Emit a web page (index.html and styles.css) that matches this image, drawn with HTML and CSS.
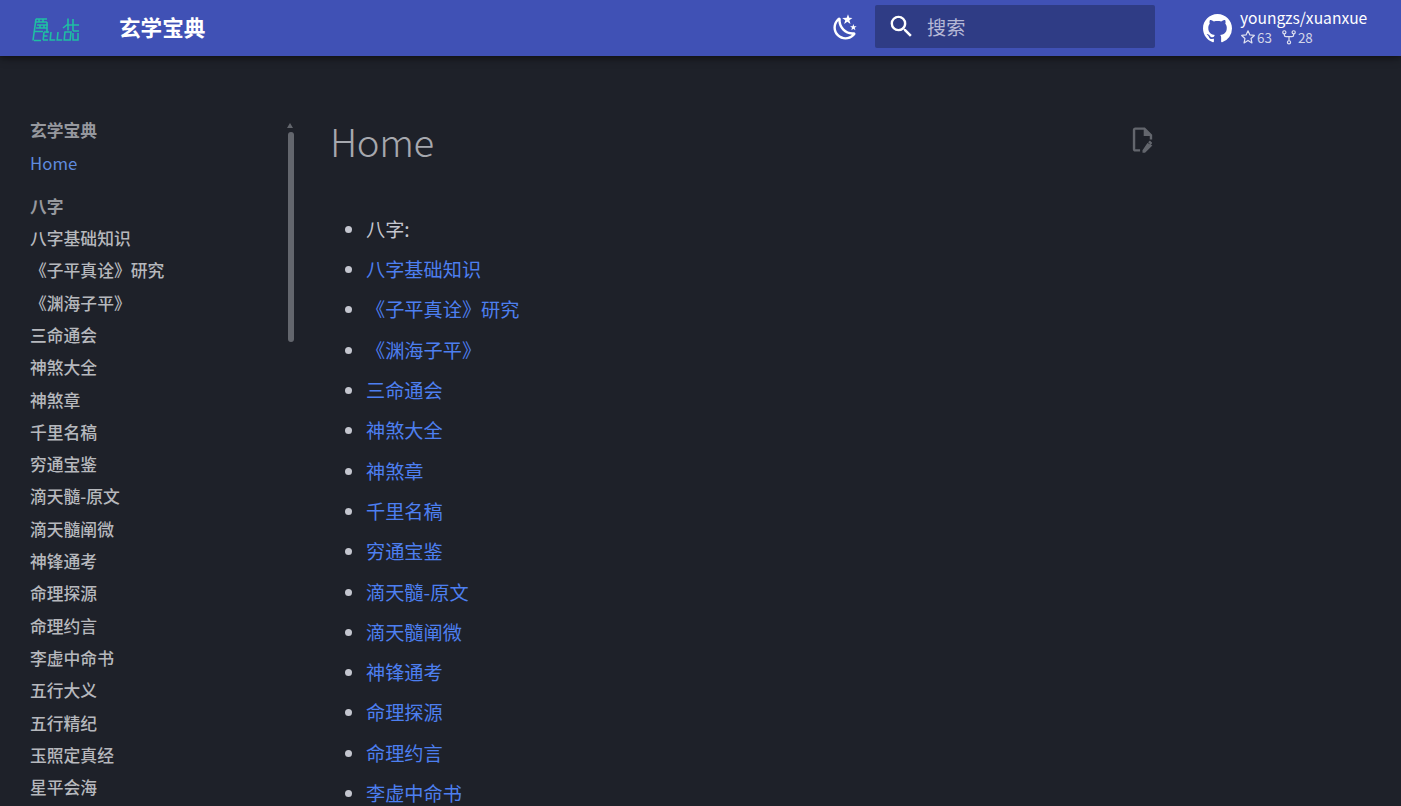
FILE: index.html
```html
<!DOCTYPE html>
<html lang="zh">
<head>
<meta charset="utf-8">
<title>玄学宝典</title>
<link rel="stylesheet" href="styles.css">
</head>
<body>
<header class="header">
  <a class="logo" href="#">
    <svg viewBox="0 0 49 24" width="49" height="24" fill="none" stroke="#1fbfa3" stroke-width="1.600">
      <path d="M5 .8 2 22.500M5 1h11M5 4h11M6 7h11M5 10h11M8 1v3M12 1v3M9 7v3M13 7v3M16 4v11"/>
      <path d="M3 13.500h9M3 22.500h7"/>
      <path d="M13 14h5M13 14l-.8 8M12.500 18h4M12 22h5M20 14l-.8 8h5M27 14l-.8 8h5M34 14h6l-.8 8h-6z"/>
      <path d="M37 .5v12M42 1v12M37 6l-5 4M37 7h11M42 13h6"/>
      <path d="M42 15v7h5v-7"/>
    </svg>
  </a>
  <div class="site-title">玄学宝典</div>
  <button class="theme" aria-label="切换主题">
    <svg viewBox="0 0 24 24" width="29" height="29" fill="#fff"><path d="M17.750 4.090 15.220 6.030l.910 3.060-2.630-1.810-2.630 1.810.910-3.060-2.530-1.940L13 4l1.060-3 1.060 3zm3.500 6.910-1.640 1.250.590 1.980-1.700-1.170-1.700 1.170.590-1.980L15.750 11l2.060-.050L18.500 9l.690 1.950zm-2.280 4.950c.830-.080 1.720 1.100 1.190 1.850-.320.450-.660.870-1.080 1.270C15.170 23 8.840 23 4.940 19.070c-3.910-3.900-3.910-10.240 0-14.140.400-.400.820-.760 1.270-1.080.750-.530 1.930.360 1.850 1.190-.270 2.860.690 5.830 2.890 8.020a9.960 9.960 0 0 0 8.020 2.890m-1.640 2.020a12.080 12.080 0 0 1-7.800-3.470c-2.170-2.190-3.330-5-3.490-7.820-2.810 3.140-2.700 7.960.310 10.980 3.020 3.010 7.840 3.120 10.980.310"/></svg>
  </button>
  <div class="search">
    <svg viewBox="0 0 24 24" width="29" height="29" fill="#fff"><path d="M9.500 3A6.500 6.500 0 0 1 16 9.500c0 1.610-.590 3.090-1.560 4.230l.270.270h.790l5 5-1.500 1.500-5-5v-.790l-.270-.270A6.516 6.516 0 0 1 9.500 16 6.500 6.500 0 0 1 3 9.500 6.500 6.500 0 0 1 9.500 3m0 2C7 5 5 7 5 9.500S7 14 9.500 14 14 12 14 9.500 12 5 9.500 5"/></svg>
    <span class="search-label">搜索</span>
  </div>
  <a class="repo" href="#">
    <svg class="repo-icon" viewBox="0 0 16 16" width="29" height="29" fill="#fff"><path d="M8 0C3.580 0 0 3.580 0 8c0 3.540 2.290 6.530 5.470 7.590.400.070.550-.170.550-.380 0-.190-.010-.820-.010-1.490-2.010.370-2.530-.490-2.690-.940-.090-.230-.480-.940-.820-1.130-.280-.150-.680-.520-.010-.530.630-.010 1.080.580 1.230.820.720 1.210 1.870.870 2.330.660.070-.520.280-.870.510-1.070-1.780-.200-3.640-.890-3.640-3.950 0-.870.310-1.590.820-2.150-.080-.200-.360-1.020.080-2.120 0 0 .670-.210 2.200.820.640-.180 1.320-.270 2-.270s1.360.090 2 .270c1.530-1.040 2.200-.820 2.200-.820.440 1.100.160 1.920.080 2.120.510.560.820 1.270.820 2.150 0 3.070-1.870 3.750-3.650 3.950.290.250.540.730.540 1.480 0 1.070-.010 1.930-.010 2.200 0 .210.150.460.550.380A8.010 8.010 0 0 0 16 8c0-4.420-3.580-8-8-8"/></svg>
    <div class="repo-text">
      <div class="repo-name">youngzs/xuanxue</div>
      <div class="repo-facts">
        <span class="fact">
          <svg viewBox="0 0 24 24" width="16" height="16" fill="none" stroke="#dfe1f0" stroke-width="1.800" stroke-linejoin="round"><path d="M12 2.800l2.900 6.100 6.600.800-4.900 4.600 1.300 6.600L12 17.200l-5.900 3.700 1.300-6.600-4.900-4.600 6.600-.800z"/></svg><span>63</span>
        </span>
        <span class="fact">
          <svg viewBox="0 0 24 24" width="16" height="16" fill="none" stroke="#dfe1f0" stroke-width="1.800"><circle cx="5" cy="5" r="2.400"/><circle cx="19" cy="5" r="2.400"/><circle cx="12" cy="20" r="2.400"/><path d="M5 7.500V9q0 2.500 2.500 2.500h9Q19 11.500 19 9V7.500M12 11.500v6"/></svg><span>28</span>
        </span>
      </div>
    </div>
  </a>
</header>
<div class="page">
  <nav class="sidebar">
    <div class="nav-scroll">
      <div class="nav-head nav-head-top">玄学宝典</div>
      <a class="nav-link nav-active" href="#">Home</a>
      <div class="nav-head nav-head-section">八字</div>
      <a class="nav-link" href="#">八字基础知识</a>
      <a class="nav-link" href="#">《子平真诠》研究</a>
      <a class="nav-link" href="#">《渊海子平》</a>
      <a class="nav-link" href="#">三命通会</a>
      <a class="nav-link" href="#">神煞大全</a>
      <a class="nav-link" href="#">神煞章</a>
      <a class="nav-link" href="#">千里名稿</a>
      <a class="nav-link" href="#">穷通宝鉴</a>
      <a class="nav-link" href="#">滴天髓-原文</a>
      <a class="nav-link" href="#">滴天髓阐微</a>
      <a class="nav-link" href="#">神锋通考</a>
      <a class="nav-link" href="#">命理探源</a>
      <a class="nav-link" href="#">命理约言</a>
      <a class="nav-link" href="#">李虚中命书</a>
      <a class="nav-link" href="#">五行大义</a>
      <a class="nav-link" href="#">五行精纪</a>
      <a class="nav-link" href="#">玉照定真经</a>
      <a class="nav-link" href="#">星平会海</a>
    </div>
    <div class="scroll-arrow"></div>
    <div class="scroll-thumb"></div>
  </nav>
  <main class="content">
    <a class="edit" href="#" aria-label="编辑">
      <svg viewBox="0 0 24 24" width="29" height="29" fill="#63666d"><path d="M6 2c-1.100 0-2 .900-2 2v16c0 1.100.900 2 2 2h4v-2H6V4h7v5h5v3h2V8l-6-6zm12.100 11c-.100 0-.300.100-.400.200l-1 1 2.100 2.100 1-1c.200-.200.200-.600 0-.800l-1.300-1.300c-.100-.100-.200-.200-.400-.200m-2 1.800L12 20.900V23h2.100l6.100-6.100z"/></svg>
    </a>
    <h1 class="title">Home</h1>
    <ul class="list">
      <li>八字:</li>
      <li><a href="#">八字基础知识</a></li>
      <li><a href="#">《子平真诠》研究</a></li>
      <li><a href="#">《渊海子平》</a></li>
      <li><a href="#">三命通会</a></li>
      <li><a href="#">神煞大全</a></li>
      <li><a href="#">神煞章</a></li>
      <li><a href="#">千里名稿</a></li>
      <li><a href="#">穷通宝鉴</a></li>
      <li><a href="#">滴天髓-原文</a></li>
      <li><a href="#">滴天髓阐微</a></li>
      <li><a href="#">神锋通考</a></li>
      <li><a href="#">命理探源</a></li>
      <li><a href="#">命理约言</a></li>
      <li><a href="#">李虚中命书</a></li>
    </ul>
  </main>
</div>
</body>
</html>
```
FILE: styles.css
```css
* { box-sizing: border-box; }
html, body { margin: 0; height: 100%; overflow: hidden; }
body {
  background: #1e2129;
  font-family: "Noto Sans CJK SC", "Noto Sans", sans-serif;
  color: #d5d7e2;
}
a { text-decoration: none; color: inherit; }
.header {
  height: 56px;
  background: #4051b5;
  display: flex;
  align-items: center;
  color: #fff;
  box-shadow: 0 0 4px rgba(0,0,0,.3), 0 3px 8px rgba(0,0,0,.35);
  position: relative;
}
.logo { margin-left: 31px; margin-top: 3px; width: 49px; height: 24px; display: flex; }
.site-title { margin-left: 39px; margin-top: -2px; font-size: 21.600px; font-weight: 700; line-height: 28px; flex: 1; }
.theme { background: none; border: 0; padding: 0; width: 29px; height: 29px; margin-top: -2px; margin-right: 15px; display: flex; }
.search {
  width: 280px; height: 43px; margin-top: -3px;
  background: #2f3c85;
  border-radius: 2px;
  display: flex; align-items: center;
  padding-left: 12px;
}
.search-label { margin-left: 11px; font-size: 19.200px; color: #b5b8d6; }
.repo { margin-left: 48px; width: 198px; display: flex; align-items: center; }
.repo-icon { margin-right: 8px; flex: none; }
.repo-text { display: flex; flex-direction: column; gap: 2px; margin-top: -4px; }
.repo-name { font-size: 15.600px; line-height: 20px; font-weight: 400; }
.repo-facts { display: flex; gap: 9px; font-size: 13.400px; line-height: 16px; color: #d2d5e8; }
.fact { display: flex; align-items: center; gap: 1px; }
.page { display: flex; height: 750px; }
.sidebar { width: 331px; position: relative; overflow: hidden; flex: none; padding: 62px 0 0 30px; }
.nav-scroll { display: flex; flex-direction: column; align-items: flex-start; }
.nav-head { font-size: 16.800px; font-weight: 700; line-height: 25px; color: #96989e; }
.nav-head-section { margin-top: 10.500px; margin-bottom: 7.300px; }
.nav-head-top { margin-bottom: 8px; }
.nav-link { font-size: 16.800px; line-height: 25px; margin-bottom: 7.300px; color: #b6b8bd; font-weight: 500; }
.nav-active { color: #5e8bde; font-weight: 400; }
.scroll-arrow {
  position: absolute; left: 287px; top: 67px;
  border: 3.500px solid transparent; border-top: 0; border-bottom: 5px solid #63666d;
}
.scroll-thumb {
  position: absolute; left: 288px; top: 76px; width: 6px; height: 210px;
  background: #63666d; border-radius: 3px;
}
.content { width: 824px; position: relative; padding-top: 62px; }
.edit { position: absolute; right: -2px; top: 69px; width: 29px; height: 29px; }
.title { margin: 0 0 0 -1px; font-size: 38.400px; font-weight: 300; line-height: 44px; letter-spacing: -.4px; color: #a6a8ae; }
.list { margin: 52.700px 0 0; padding: 0 0 0 35px; font-size: 19.200px; line-height: 28.800px; color: #c4c6cf; list-style: none; }
.list li { margin-bottom: 11.520px; position: relative; }
.list li::before {
  content: ""; position: absolute; left: -21px; top: 11px;
  width: 7px; height: 7px; border-radius: 50%; background: #c4c6cf;
}
.list a { color: #4d7ff0; }
```
